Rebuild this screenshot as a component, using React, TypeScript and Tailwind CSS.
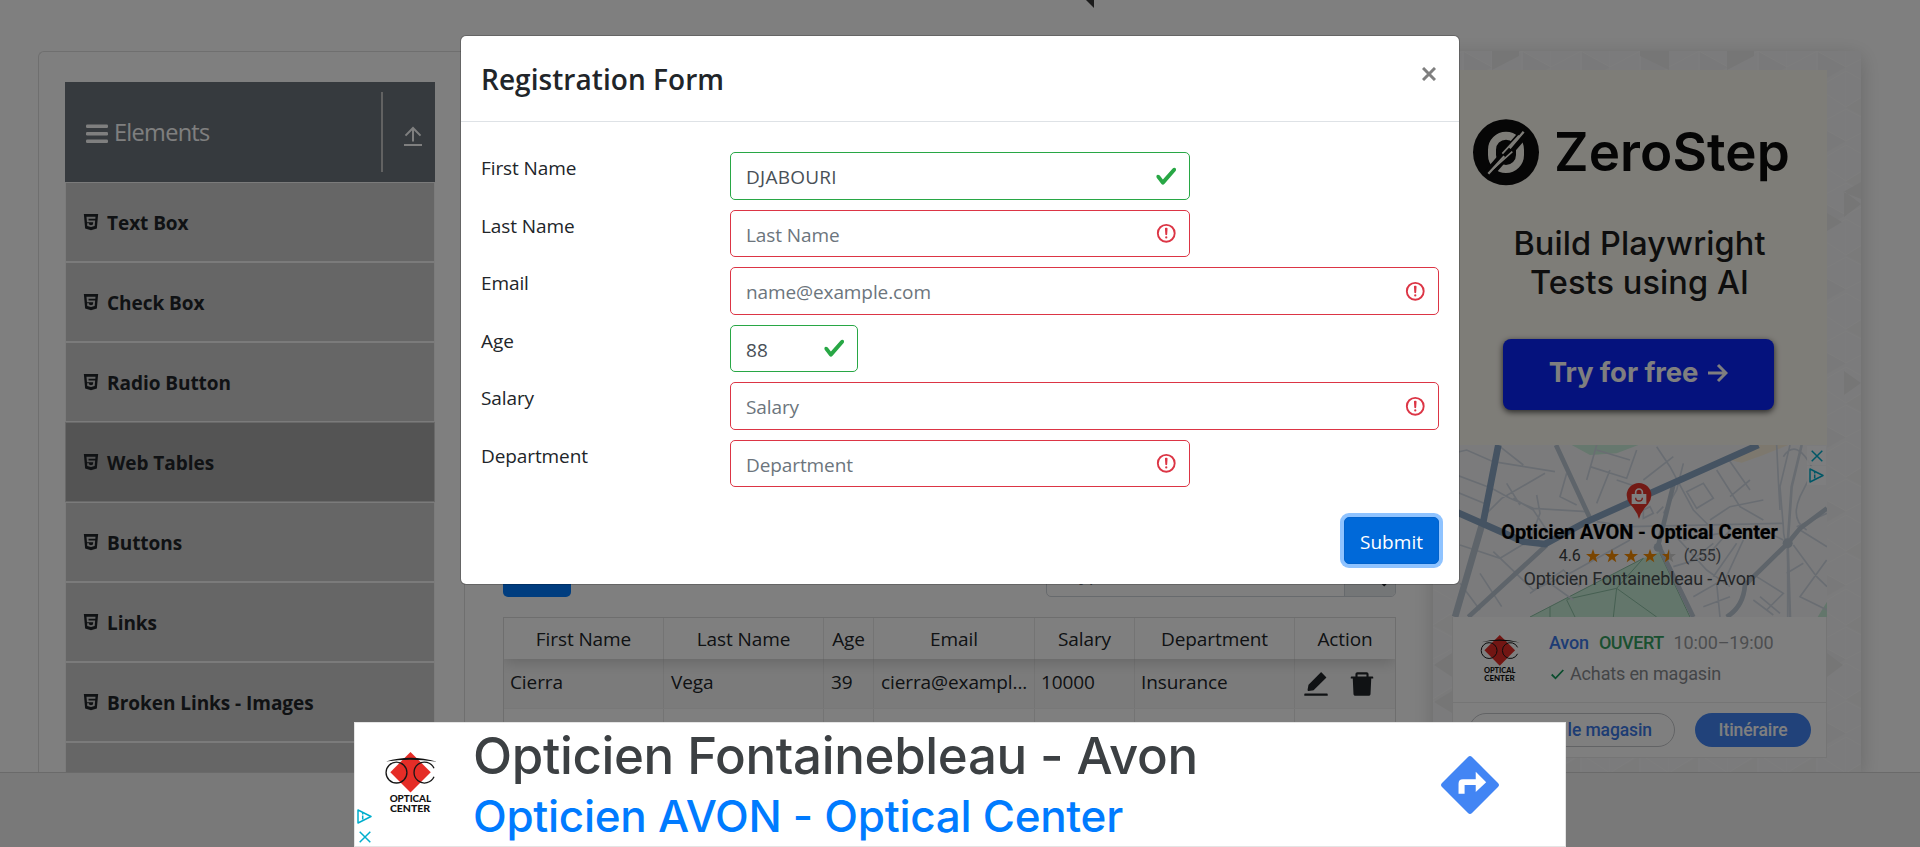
import React from "react";
import { AiFillDelete, AiFillEdit, AiFillHtml5 } from "react-icons/ai";

const items = ["Text Box", "Check Box", "Radio Button", "Web Tables", "Buttons", "Links", "Broken Links - Images", ""];

function Sidebar() {
  return (
    <aside className="w-[370px] shrink-0">
      <div className="flex h-[100px] items-center bg-[#6c757d] text-white">
        <svg className="ml-[21px] mt-[3px] h-5 w-[22px]" viewBox="0 0 22 20" fill="#fff">
          <rect y="0.5" width="22" height="3.4" rx="1.2" />
          <rect y="8" width="22" height="3.4" rx="1.2" />
          <rect y="15.6" width="22" height="3.4" rx="1.2" />
        </svg>
        <span className="ml-[6px] text-[23.5px] leading-[30px] tracking-[-0.7px]">Elements</span>
        <div className="ml-auto h-20 w-[2px] bg-[#c4c4c4]" />
        <svg className="ml-[21px] mr-[13px] mt-[7px] h-5 w-[18px]" viewBox="0 0 18 20" fill="none" stroke="#fff" strokeWidth="2">
          <path d="M9 15.5V2M1.5 9.6 9 2l7.500 7.600M0 19h18" />
        </svg>
      </div>
      <ul>
        {items.map((t) => (
          <li
            key={t}
            className={
              t === "Web Tables"
                ? "flex h-20 items-center border border-[#d2d2d2] bg-[#a9a9a9] pl-[15px]"
                : "flex h-20 items-center border border-[#f6f6f6] bg-[#cccccc] pl-[15px]"
            }
          >
            {t && <AiFillHtml5 size={20} className="-mt-[1px] text-[#212529]" />}
            <span className="ml-[6px] pt-[2px] text-[19px] leading-[30px] font-bold tracking-[-0.05px] text-[#212529]">{t}</span>
          </li>
        ))}
      </ul>
    </aside>
  );
}

function OpticalLogo({ className }: { className: string }) {
  return (
    <svg className={className} viewBox="0 0 160 190">
      <path d="M77 0 139 62 77 124 15 62Z" fill="#e52d27" />
      <path d="M2 29Q77 6 158 30Q77 18 2 29Z" fill="#111" />
      <circle cx="34" cy="63" r="32" fill="none" stroke="#161616" strokeWidth="4" />
      <path d="M149 50A32 32 0 1 0 149 76" fill="none" stroke="#161616" strokeWidth="4" />
      <text x="13" y="154" textLength="127" lengthAdjust="spacingAndGlyphs" className="font-['Lato'] text-[29px] font-black" fill="#111">OPTICAL</text>
      <text x="14" y="184" textLength="123" lengthAdjust="spacingAndGlyphs" className="font-['Lato'] text-[29px] font-black" fill="#111">CENTER</text>
    </svg>
  );
}

function AdInfo({ className }: { className: string }) {
  return (
    <svg className={className} viewBox="0 0 15 15" fill="none" stroke="#00aecd" strokeWidth="1.5">
      <path d="M1 1 14 7.500 1 14Z" strokeLinejoin="round" />
      <path d="M5.700 6.500v4M5.700 4v1.400" />
    </svg>
  );
}

function AdClose({ className }: { className: string }) {
  return (
    <svg className={className} viewBox="0 0 12 12" fill="none" stroke="#00aecd" strokeWidth="1.500">
      <path d="M.7.7 11.300 11.300M11.300.7.7 11.300" />
    </svg>
  );
}

function MapPicture() {
  return (
    <svg className="h-[172px] w-[375px]" viewBox="66 45 1125 516" preserveAspectRatio="none">
      <rect x="66" y="45" width="1125" height="516" fill="#f7f7f8" />
      <path d="M425 45 480 75 560 70 625 45Z" fill="#ccf0dc" />
      <path d="M900 90 985 45 1075 45 1000 75 935 98Z" fill="#fbf0dc" />
      <path d="M300 561 640 385 690 365 780 561ZM1163 561 1191 515 1191 561Z" fill="#c6ecd6" />
      <g fill="none" stroke="#8cbfa4" strokeWidth="3">
        <path d="M300 561 640 385M690 370 780 561M410 508 560 475 680 561M560 475 550 561M410 510 435 561M360 530V561M560 475 640 385" />
      </g>
      <g fill="none" stroke="#d3dae5" strokeWidth="5">
        <path d="M66 70 110 60 190 95 375 125M66 130 185 175 240 205 310 235 470 245M66 180 175 225M210 50 280 105M160 260 215 205 345 130M230 160 270 225M90 345 210 385 300 330 330 250 320 195M250 205 310 240 370 330M190 365 310 480 420 430 600 330M150 430 215 530M90 460 150 540M470 150 500 45M410 130 390 200 440 225M480 110 590 145 620 60M500 60 600 90M540 120 500 220M560 150 620 170M680 50 720 110 790 240 850 300M760 100 740 180 700 250M640 150 730 80M770 185 820 160 850 205 800 235ZM860 120 930 230 1000 270M890 80 960 180M900 200 960 150M840 270 900 230 1000 210M500 275 600 290 1060 280M720 300 830 420 900 470M760 330 870 310M800 380 850 340M730 410 830 380 900 300M850 440 920 340M940 330 880 460M980 440 1060 490 1010 540M1000 300 1060 330M1090 345 1160 440 1191 470M1120 400 1070 430M1110 300 1191 350M1100 290 1191 250M1190 390 1110 500 1191 540M790 500 860 460 870 561M820 530 900 500M970 510 1030 555M990 500 1050 550" />
        <path d="M1060 80Q1100 20 1150 120L1110 200Q1080 270 1130 300M1080 45 1050 170 1060 290Q1060 330 1073 340V561M1040 45 1045 150 1050 240M640 240 660 230 670 250 640 265ZM680 250 700 230M300 490 400 420 450 470M360 460 430 510" />
      </g>
      <g fill="none" stroke="#bcc8d5" strokeWidth="14">
        <path d="M378 45 480 265M115 561 350 345M730 165 685 345 790 561M1191 235 1110 295 1073 340 945 465Q940 530 890 561" />
        <path d="M160 270 75 561" strokeWidth="20" />
      </g>
      <g fill="none" stroke="#d0d8e2" strokeWidth="8">
        <path d="M1115 45 1085 170 1073 340 1080 561" />
      </g>
      <path d="M66 240 280 335 345 342 470 275 985 45M205 45 160 275" fill="none" stroke="#8aa6c4" strokeWidth="20" />
      <circle cx="1073" cy="340" r="15" fill="#bcc8d5" />
      <circle cx="684" cy="352" r="13" fill="#bcc8d5" />
      <path d="M627 267Q622 245 600 223Q590 210 590 196A37 37 0 0 1 664 196Q664 210 654 223Q632 245 627 267Z" fill="#e7352b" />
      <path d="M605 192H649V222H605Z" fill="#fff" />
      <path d="M617 195V187A10 10 0 0 1 637 187V195" fill="none" stroke="#fff" strokeWidth="5" />
      <path d="M617 203A10 10 0 0 0 637 203" fill="none" stroke="#e7352b" strokeWidth="4" />
    </svg>
  );
}

function Star({ half }: { half?: boolean }) {
  const d = "M7 0 8.700 4.900 14 5 9.800 8.200 11.300 13.300 7 10.300 2.700 13.300 4.200 8.200 0 5 5.300 4.900Z";
  return (
    <svg className="h-[14px] w-[14px]" viewBox="0 0 14 14">
      <path d={d} fill={half ? "#d0d0d0" : "#f58a00"} />
      {half && <path d="M7 0V10.300L2.700 13.300 4.200 8.200 0 5 5.300 4.900Z" fill="#f58a00" />}
    </svg>
  );
}

function RightBanner() {
  return (
    <div className="relative flex w-[428px] shrink-0 flex-col bg-[#f7f7f8] pt-[19px] pl-[19px] shadow-[0_5px_20px_rgba(0,0,0,0.18)]">
      <svg className="absolute inset-0 h-full w-full">
        <defs>
          <pattern id="tri" width="59" height="74" patternUnits="userSpaceOnUse">
            <path d="M0 0H59V74H0Z" fill="#f7f7f8" />
            <path d="M31 0 59 16 31 32Z" fill="#f3f3f4" />
            <path d="M29 40 0 56 29 72Z" fill="#f4f4f5" />
            <path d="M30 0V74M0 16 30 0 59 16M0 20 30 37 59 20M0 56 30 37 59 56M0 58 30 74 59 58M59 0V74" stroke="#fbfbfc" strokeWidth="1" fill="none" />
          </pattern>
        </defs>
        <rect width="428" height="721" fill="url(#tri)" />
        <g fill="#ececed">
          <path d="M59 0V19L86 5V0ZM236 0V19L207 5V0ZM294 0V19L321 5V0Z" />
          <path d="M394 162 409 171 394 180ZM428 148 410 141 428 131ZM411 140V166L428 153Z" />
          <path d="M1 614 19 602V626ZM1 651 19 640V662ZM394 602 410 614 394 626ZM411 320V344L428 332Z" />
        </g>
      </svg>
      <div className="relative flex h-[375px] w-[375px] flex-col items-center bg-[#fdfaf1] text-[#0a0a0a]">
        <div className="mt-[46px] flex h-[72px] w-full items-center pl-[21px]">
          <svg className="h-[67px] w-[66px]" viewBox="0 0 198 201">
            <circle cx="99" cy="100" r="99" fill="#0c0c0c" />
            <rect x="57" y="50" width="84" height="100" rx="42" fill="none" stroke="#fdfaf1" strokeWidth="24" />
            <path d="M44 168 156 40" stroke="#0c0c0c" strokeWidth="30" />
            <path d="M46 164 94 112M110 88 152 38" stroke="#fdfaf1" strokeWidth="7" />
            <path d="M60 150 118 98M88 104 138 50" stroke="#fdfaf1" strokeWidth="5" />
          </svg>
          <span className="ml-[15px] font-['Inter'] text-[53px] leading-[72px] font-semibold tracking-[0.1px]">ZeroStep</span>
        </div>
        <p className="mt-[36px] text-center font-['Inter'] text-[32.5px] leading-[39px] font-medium tracking-[0.1px] text-[#1c1c1c]">
          Build Playwright<br />Tests using AI
        </p>
        <div className="mt-[37px] mr-[2px] flex h-[71px] w-[271px] items-center justify-center gap-[10px] rounded-[8px] bg-[#0a24fb] pb-[3px] font-['Inter'] text-[27.5px] font-bold text-white shadow-[0_2px_6px_rgba(0,0,0,0.7)]">
          <span>Try for free</span>
          <svg className="h-5 w-5" viewBox="0 0 20 20" fill="none" stroke="#fff" strokeWidth="3">
            <path d="M0 10H18M10 2 18 10 10 18" />
          </svg>
        </div>
      </div>
      <div className="relative w-[375px] bg-white font-['Roboto']">
        <MapPicture />
        <div className="absolute inset-x-0 top-[74px] flex flex-col items-center whitespace-nowrap">
          <span className="text-[20px] leading-[26px] font-bold tracking-[-0.1px] text-black [-webkit-text-stroke:0.2px_black]">Opticien AVON - Optical Center</span>
          <span className="flex h-[22px] items-center gap-[5px] pl-px text-[16px] text-[#3c4043]">
            4.6
            <Star /><Star /><Star /><Star /><Star half />
            <span className="ml-[3px] text-[#5f6368]">(255)</span>
          </span>
          <span className="text-[18px] leading-[24px] tracking-[-0.2px] text-[#484c50]">Opticien Fontainebleau - Avon</span>
        </div>
        <div className="absolute top-px right-px flex flex-col items-center gap-px">
          <span className="flex h-[19px] w-[19px] items-center justify-center bg-white/80"><AdClose className="h-3 w-3" /></span>
          <span className="flex h-[19px] w-[19px] items-center justify-center bg-white/80"><AdInfo className="h-[15px] w-[15px]" /></span>
        </div>
        <div className="flex h-[86px] border-x border-b border-[#ebebeb]">
          <OpticalLogo className="mt-[18px] ml-[27px] h-[47px] w-[41px]" />
          <div className="ml-[28px] pt-[14px] text-[18px] leading-[24px] tracking-[-0.15px]">
            <p className="flex">
              <span className="font-medium text-[#3c78e8]">Avon</span>
              <span className="ml-[10px] font-medium tracking-[-0.5px] text-[#34a060]">OUVERT</span>
              <span className="ml-[10px] text-[#9a9da1]">10:00–19:00</span>
            </p>
            <p className="mt-[7px] flex items-center text-[#888b8f]">
              <svg className="mr-[6px] ml-[2px] h-[11px] w-[13px]" viewBox="0 0 13 11" fill="none" stroke="#159a5c" strokeWidth="1.800">
                <path d="M.7 5.500 4.500 9.300 12.300 1" />
              </svg>
              Achats en magasin
            </p>
          </div>
        </div>
        <div className="flex h-[55px] items-start border-x border-b border-[#ebebeb] pt-[10px] pl-[16px] text-[17.5px] leading-[32px] font-medium">
          <span className="h-[34px] w-[206px] rounded-full border border-[#c4c6ca] pr-[22px] text-right tracking-[-0.1px] text-[#3b78e7]">Contacter le magasin</span>
          <span className="ml-[20px] h-[34px] w-[116px] rounded-full bg-[#4285f4] text-center leading-[34px] tracking-[-0.05px] text-white">Itinéraire</span>
        </div>
      </div>
    </div>
  );
}

function DataTable() {
  const cell = "border-r border-[#e9e9e9] truncate";
  const cols = "grid grid-cols-[160px_160px_50px_161px_100px_160px_101px]";
  return (
    <div className="h-[155px] w-[893px] overflow-hidden border border-b-0 border-[#dcdcdc]">
      <div className={cols + " relative h-[41px] text-center leading-[42px] shadow-[0_3px_15px_rgba(0,0,0,0.18)]"}>
        {["First Name", "Last Name", "Age", "Email", "Salary", "Department", "Action"].map((h) => (
          <span key={h} className={cell}>{h}</span>
        ))}
      </div>
      <div className={cols + " h-[50px] border-b border-[#f0f0f0] bg-[#f7f7f7] leading-[46px]"}>
        <span className={cell + " pl-[6px]"}>Cierra</span>
        <span className={cell + " pl-[7px]"}>Vega</span>
        <span className={cell + " pl-[7px]"}>39</span>
        <span className={cell + " pl-[7px] tracking-[-0.1px]"}>cierra@exampl...</span>
        <span className={cell + " pl-[6px]"}>10000</span>
        <span className={cell + " pl-[6px]"}>Insurance</span>
        <span className="flex items-center gap-[16px] pl-[6px] text-[#212529]">
          <AiFillEdit size={30} />
          <AiFillDelete size={30} />
        </span>
      </div>
      <div className={cols + " h-[70px]"}>
        {[0, 1, 2, 3, 4, 5].map((n) => <span key={n} className={cell} />)}
      </div>
    </div>
  );
}

function Page() {
  return (
    <div className="flex h-[847px] flex-col overflow-hidden bg-white">
      <div className="flex h-[51px] shrink-0 justify-center">
        <svg className="ml-[259px] h-2 w-[10px]" viewBox="0 0 10 8"><path d="M1 0H9V8L7 6Z" fill="#383838" /></svg>
      </div>
      <div className="flex h-[721px] shrink-0 pl-[38px]">
        <div className="flex w-[1395px] rounded-tl-[6px] border-t border-l border-[#dedede] pt-[30px] pl-[26px]">
          <Sidebar />
          <div className="-mt-[30px] ml-[29px] w-[960px] border-l border-[#dedede] pt-[490px] pl-[38px]">
            <div className="flex h-[55px] items-end justify-between pr-[28px]">
              <span className="h-[47px] w-[68px] rounded-[5px] bg-[#007bff]" />
              <div className="flex h-[47px] w-[350px] overflow-hidden rounded-[5px] border border-[#ced4da] text-[#6c757d]">
                <span className="w-[297px] pl-[22px] leading-[46px]">Type to search</span>
                <span className="flex grow items-center justify-center border-l border-[#ced4da] bg-[#e9ecef]">
                  <svg className="mt-1 ml-3 h-[22px] w-[22px]" viewBox="0 0 20 20" fill="none" stroke="#212529" strokeWidth="3"><circle cx="8" cy="8" r="6" /><path d="m12.500 12.500 6 6" /></svg>
                </span>
              </div>
            </div>
            <div className="mt-[20px]"><DataTable /></div>
          </div>
        </div>
        <RightBanner />
      </div>
      <div className="relative h-[75px] shrink-0 border-t border-[#d4d4d4] bg-[#f2f2f2]" />
    </div>
  );
}

type FieldProps = { label: string; value?: string; placeholder?: string; width: string };

function Field({ label, value, placeholder, width }: FieldProps) {
  const ok = value !== undefined;
  return (
    <div className="flex h-[47.5px]">
      <span className="w-[249px] pt-px leading-[30px] text-[#212529]">{label}</span>
      <div className={width + " flex items-center justify-between rounded-[5px] border pr-[11.5px] pl-[15px] " + (ok ? "border-[#28a745]" : "border-[#dc3545]")}>
        <span className={"pt-[2.5px] leading-[30px] " + (ok ? "tracking-[0.25px] text-[#495057]" : "text-[#6c757d]")}>{ok ? value : placeholder}</span>
        {ok ? (
          <svg className="h-[22.5px] w-[22.5px]" viewBox="0 0 8 8">
            <path fill="#28a745" d="M2.300 6.730L.6 4.530c-.4-1.040.46-1.400 1.100-.8l1.100 1.400 3.400-3.800c.6-.63 1.600-.27 1.200.7l-4 4.600c-.43.5-.8.4-1.100.1z" />
          </svg>
        ) : (
          <svg className="h-[22.5px] w-[22.5px]" viewBox="0 0 12 12" fill="none" stroke="#dc3545">
            <circle cx="6" cy="6" r="4.500" />
            <path strokeLinejoin="round" d="M5.800 3.600h.4L6 6.500z" />
            <circle cx="6" cy="8.200" r=".6" fill="#dc3545" stroke="none" />
          </svg>
        )}
      </div>
    </div>
  );
}

function Modal() {
  return (
    <div className="absolute top-[35px] left-[460px] flex h-[550px] w-[1000px] flex-col rounded-[6px] border border-black/20 bg-white bg-clip-padding">
      <div className="flex h-[86px] shrink-0 justify-between border-b border-[#dee2e6] pl-[20px]">
        <h5 className="pt-[24px] text-[28px] leading-[38px] font-semibold tracking-[0.05px] text-[#212529]">Registration Form</h5>
        <svg className="mt-[31px] mr-[23.5px] h-[14px] w-[14px]" viewBox="0 0 14 14" stroke="#7f7f7f" strokeWidth="3">
          <path d="M1 1 13 13M13 1 1 13" />
        </svg>
      </div>
      <div className="flex flex-col gap-[10px] pt-[30px] pl-[20px]">
        <Field label="First Name" value="DJABOURI" width="w-[460px]" />
        <Field label="Last Name" placeholder="Last Name" width="w-[460px]" />
        <Field label="Email" placeholder="name@example.com" width="w-[709px]" />
        <Field label="Age" value="88" width="w-[128px]" />
        <Field label="Salary" placeholder="Salary" width="w-[709px]" />
        <Field label="Department" placeholder="Department" width="w-[460px]" />
      </div>
      <button className="mt-[29.5px] mr-[20px] flex h-[47.5px] w-[95px] items-center justify-center self-end rounded-[5px] border border-[#0062cc] bg-[#0069d9] pt-[3px] tracking-[0.05px] text-white shadow-[0_0_0_4px_#8fc3ff]">Submit</button>
    </div>
  );
}

function BottomAd() {
  return (
    <div className="absolute top-[722px] left-[354px] flex h-[125px] w-[1212px] border border-[#e4e4e4] bg-white font-['Inter'] whitespace-nowrap">
      <div className="flex w-[19px] flex-col items-center gap-[7px] pt-[86px]">
        <AdInfo className="h-[15px] w-[15px]" />
        <AdClose className="h-3 w-3" />
      </div>
      <OpticalLogo className="mt-[29px] ml-[11px] h-[62px] w-[53px]" />
      <div className="ml-[35px] pt-[3px]">
        <p className="text-[51px] leading-[60px] font-medium tracking-[-0.35px] text-[#3c4043]">Opticien Fontainebleau - Avon</p>
        <p className="text-[44px] leading-[60px] font-medium tracking-[-0.29px] text-[#007bff]">Opticien AVON - Optical Center</p>
      </div>
      <svg className="mt-[33px] mr-[66px] ml-auto h-[58px] w-[58px]" viewBox="0 0 172 172">
        <path d="M80 3Q86-3 92 3L169 80Q175 86 169 92L92 169Q86 175 80 169L3 92Q-3 86 3 80Z" fill="#4285f4" />
        <path d="M52 112V82Q52 69 65 69H103V47L134 78 103 107V86H70V112Z" fill="#fff" />
      </svg>
    </div>
  );
}

export default function App() {
  return (
    <div className="relative h-[847px] w-full overflow-hidden font-['Open_Sans',sans-serif] text-[19px] tracking-[-0.1px] text-[#212529]">
      <Page />
      <div className="absolute inset-0 bg-black/50" />
      <Modal />
      <BottomAd />
    </div>
  );
}
